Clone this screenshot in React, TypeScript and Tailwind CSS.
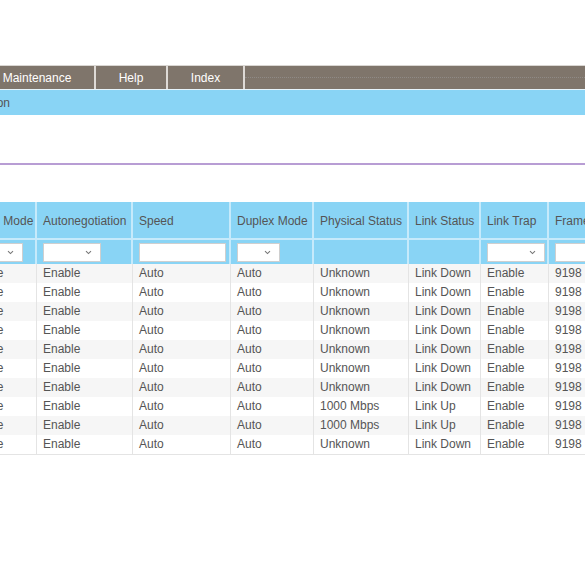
import React from 'react';

// 端口配置表：页面已经向右滚动，所以左侧内容被裁掉
const rows = [
  { phys: 'Unknown', link: 'Link Down' },
  { phys: 'Unknown', link: 'Link Down' },
  { phys: 'Unknown', link: 'Link Down' },
  { phys: 'Unknown', link: 'Link Down' },
  { phys: 'Unknown', link: 'Link Down' },
  { phys: 'Unknown', link: 'Link Down' },
  { phys: 'Unknown', link: 'Link Down' },
  { phys: '1000 Mbps', link: 'Link Up' },
  { phys: '1000 Mbps', link: 'Link Up' },
  { phys: 'Unknown', link: 'Link Down' },
];

function Chevron() {
  return (
    <svg width="7" height="5" viewBox="0 0 7 5" className="shrink-0">
      <path d="M1 1.2 L3.5 3.6 L6 1.2" fill="none" stroke="#777" strokeWidth="1.1" />
    </svg>
  );
}

function Select({ w }: { w: string }) {
  return (
    <div className={`flex h-[19px] items-center justify-end border border-[#cfcfcf] bg-white pr-[8px] ${w}`}>
      <Chevron />
    </div>
  );
}

function TextBox({ w }: { w: string }) {
  return <div className={`h-[19px] border border-[#cfcfcf] bg-white ${w}`} />;
}

const th = 'h-[38px] overflow-hidden border-r-2 border-b-2 border-[#c6eafb] bg-[#89d4f5] pl-[6px] pr-[7px] pt-[2px] text-left font-normal text-[12px] text-[#555] whitespace-nowrap';
const tf = 'h-[24px] border-r-2 border-[#c6eafb] bg-[#89d4f5] pl-[6px] pr-[7px] align-middle';
const td = 'h-[19px] overflow-hidden border-r border-[#e4e4e4] pl-[6px] pr-[7px] pb-[1px] text-[12px] leading-[18px] text-[#555] whitespace-nowrap';

export default function App() {
  return (
    <div className="h-[585px] w-[585px] overflow-hidden bg-white font-['Liberation_Sans',Arial,sans-serif]">
      <div className="h-[65px]" />

      {/* 顶部菜单 */}
      <div className="flex h-[24px] border-t border-[#d9d6d2] bg-[#7f756b] text-[12px] text-white">
        <div className="-ml-[20px] flex w-[116px] items-center justify-center border-r-2 border-[#dedad6]">Maintenance</div>
        <div className="flex w-[72px] items-center justify-center border-r-2 border-[#dedad6]">Help</div>
        <div className="flex w-[77px] items-center justify-center border-r-2 border-[#dedad6]">Index</div>
        <div className="flex flex-1 items-center">
          <div className="w-full border-t border-dotted border-[#8f8a86]" />
        </div>
      </div>

      <div className="h-px bg-[#e6f4fb]" />
      <div className="flex h-[25px] items-center bg-[#89d4f5] text-[12px] text-[#555]">
        <div className="flex w-[10px] justify-end whitespace-nowrap">Port Configuration</div>
      </div>

      <div className="h-[48px]" />
      <div className="h-[2px] bg-[#b89dd4]" />
      <div className="h-[37px]" />

      <table className="-ml-[40px] w-[679px] table-fixed border-separate border-spacing-0">
        <colgroup>
          <col className="w-[77px]" />
          <col className="w-[96px]" />
          <col className="w-[98px]" />
          <col className="w-[83px]" />
          <col className="w-[95px]" />
          <col className="w-[72px]" />
          <col className="w-[68px]" />
          <col className="w-[90px]" />
        </colgroup>
        <thead>
          <tr>
            <th className={th}>Admin Mode</th>
            <th className={th}>Autonegotiation</th>
            <th className={th}>Speed</th>
            <th className={th}>Duplex Mode</th>
            <th className={th}>Physical Status</th>
            <th className={th}>Link Status</th>
            <th className={th}>Link Trap</th>
            <th className={th}>Frame Size</th>
          </tr>
          <tr>
            <td className={tf}><Select w="w-[57px]" /></td>
            <td className={tf}><Select w="w-[58px]" /></td>
            <td className={tf}><TextBox w="w-[87px]" /></td>
            <td className={tf}><Select w="w-[43px]" /></td>
            <td className={tf} />
            <td className={tf} />
            <td className={tf}><Select w="w-[58px]" /></td>
            <td className={tf}><TextBox w="w-[70px]" /></td>
          </tr>
        </thead>
        <tbody>
          {rows.map((r, i) => (
            <tr key={i} className={i % 2 === 0 ? 'bg-[#f6f6f6]' : 'bg-white'}>
              <td className={td}>Enable</td>
              <td className={td}>Enable</td>
              <td className={td}>Auto</td>
              <td className={td}>Auto</td>
              <td className={td}>{r.phys}</td>
              <td className={td}>{r.link}</td>
              <td className={td}>Enable</td>
              <td className={td}>9198</td>
            </tr>
          ))}
          <tr>
            <td colSpan={8} className="h-0 border-t border-[#e4e4e4] p-0" />
          </tr>
        </tbody>
      </table>
    </div>
  );
}
